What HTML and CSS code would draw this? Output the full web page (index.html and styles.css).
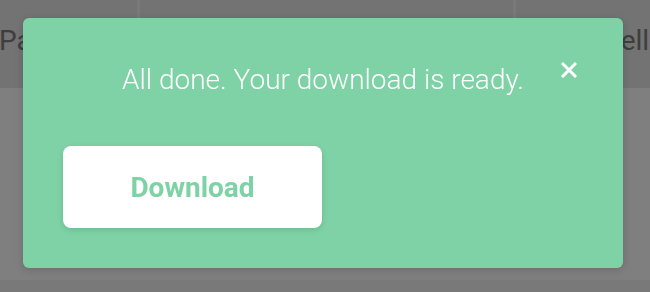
FILE: index.html
```html
<!DOCTYPE html>
<html lang="en">
<head>
  <meta charset="UTF-8">
  <title>Download ready</title>
  <link rel="stylesheet" href="styles.css">
</head>
<body>
  <div class="page">
    <div class="tabs">
      <div class="tab tab-first">Payment</div>
      <div class="tab tab-mid">Details</div>
      <div class="tab tab-last">Sell</div>
    </div>
    <div class="content"></div>
  </div>

  <div class="overlay"></div>

  <div class="modal">
    <button class="close" aria-label="Close">
      <svg width="16" height="16" viewBox="0 0 16 16">
        <path d="M2 2 L14 14 M14 2 L2 14" stroke="#fff" stroke-width="3" stroke-linecap="square" fill="none"/>
      </svg>
    </button>
    <p class="message">All done. Your download is ready.</p>
    <div class="actions">
      <button class="download">Download</button>
    </div>
  </div>
</body>
</html>
```

FILE: styles.css
```css
html, body {
  margin: 0;
  height: 100%;
}

body {
  font-family: Roboto, "Liberation Sans", sans-serif;
  background: #fff;
  overflow: hidden;
}

.page {
  height: 100%;
  display: flex;
  flex-direction: column;
}

.tabs {
  height: 88px;
  display: grid;
  grid-template-columns: 140px 376px 1fr;
  background: #e6e6e6;
}

.tab {
  display: flex;
  align-items: center;
  font-size: 28px;
  font-weight: 400;
  color: #7c7c7c;
  border-right: 3px solid #f2f2f2;
  white-space: nowrap;
  overflow: hidden;
  padding-bottom: 8px;
}

.tab-first {
  margin-left: -1px;
}

.tab-mid {
  justify-content: center;
}

.tab-last {
  padding-left: 88px;
  border-right: none;
}

.content {
  flex: 1;
  background: #fff;
  border-bottom: 12px solid #f3f3f3;
}

.overlay {
  position: fixed;
  inset: 0;
  background: rgba(0, 0, 0, 0.5);
}

.modal {
  position: absolute;
  top: 18px;
  left: 23px;
  width: 600px;
  height: 250px;
  box-sizing: border-box;
  padding: 40px 40px;
  background: #7ed2a6;
  border-radius: 6px;
  box-shadow: 0 2px 8px rgba(0, 0, 0, 0.15);
  display: flex;
  flex-direction: column;
}

.message {
  margin: 4px 0 0 0;
  text-align: center;
  color: #fff;
  font-size: 28px;
  font-weight: 300;
  line-height: 36px;
}

.close {
  position: absolute;
  top: 44px;
  right: 46px;
  width: 16px;
  height: 16px;
  padding: 0;
  border: none;
  background: none;
  cursor: pointer;
}

.close svg {
  display: block;
}

.actions {
  margin-top: 48px;
}

.download {
  width: 259px;
  height: 82px;
  border: none;
  border-radius: 8px;
  background: #fff;
  color: #7ed2a6;
  font-family: Roboto, "Liberation Sans", sans-serif;
  font-size: 28px;
  font-weight: 700;
  box-shadow: 0 2px 6px rgba(0, 0, 0, 0.12);
  cursor: pointer;
}
```
